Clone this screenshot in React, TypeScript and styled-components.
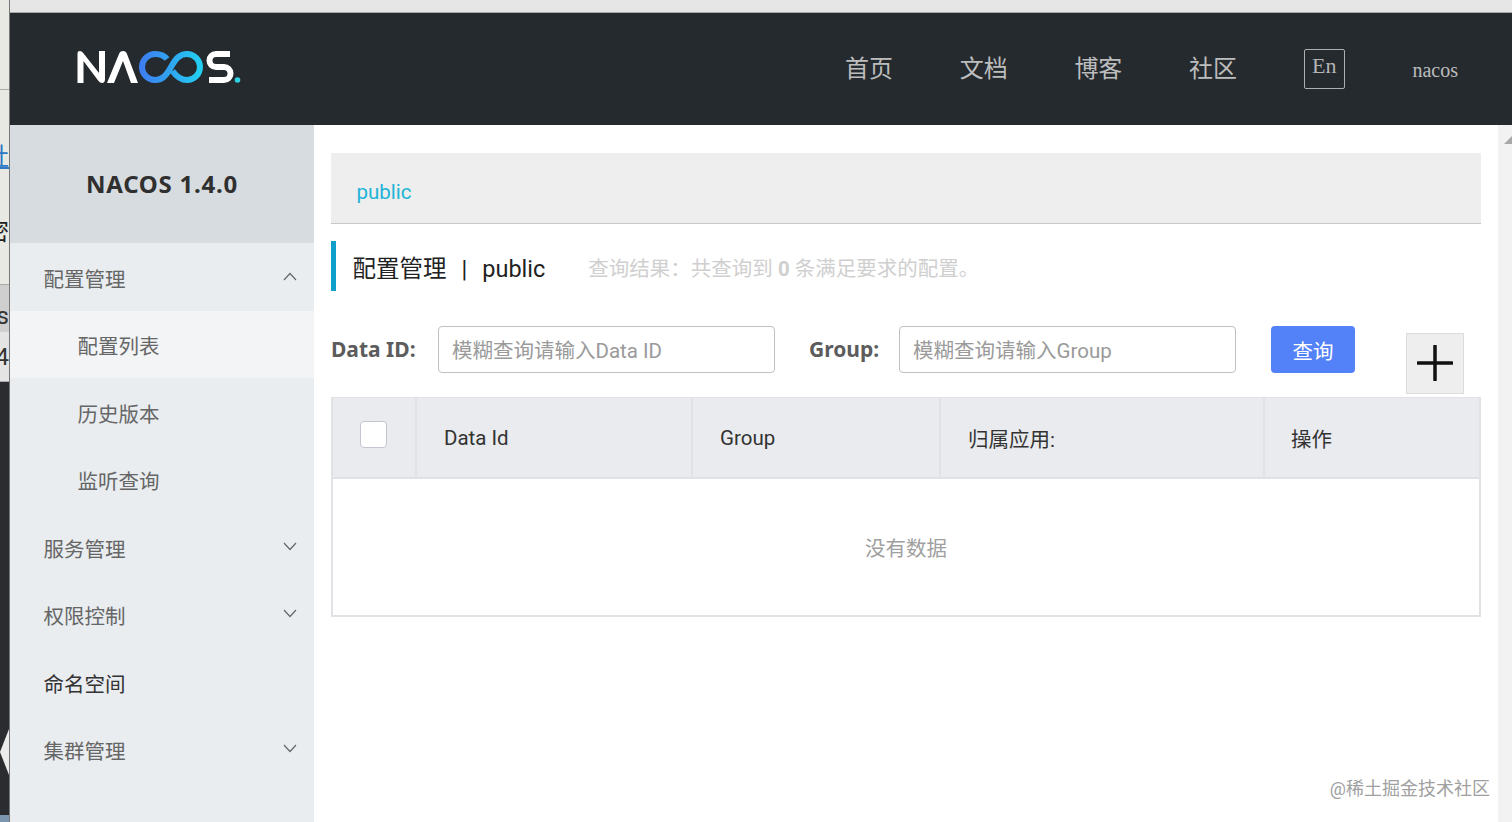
import React from "react";
import styled, { createGlobalStyle } from "styled-components";

const Global = createGlobalStyle`
  html, body { margin: 0; padding: 0; height: 822px; overflow: hidden; background: #fff; }
  #root { height: 822px; }
  * { box-sizing: border-box; }
`;

const CJK = `Roboto, "Noto Sans CJK SC", sans-serif`;

const Shell = styled.div`
  display: flex;
  width: 1512px;
  height: 822px;
  position: relative;
  overflow: hidden;
  font-family: ${CJK};
`;

const Strip = styled.div`
  width: 10px;
  flex: none;
  display: flex;
  flex-direction: column;
  border-right: 1px solid #777;
  overflow: hidden;
`;

const StripPart = styled.div<{ $h: number; $bg: string; $color?: string; $line?: boolean; $under?: boolean }>`
  height: ${(p) => p.$h}px;
  flex: none;
  background: ${(p) => p.$bg};
  color: ${(p) => p.$color || "#222"};
  font-size: 24px;
  line-height: ${(p) => p.$h}px;
  white-space: nowrap;
  text-decoration: ${(p) => (p.$under ? "underline" : "none")};
  border-bottom: ${(p) => (p.$line ? "1px solid #aaa" : "none")};
  display: flex;
  justify-content: flex-end;
  position: relative;
`;

const StripArrow = styled.div`
  position: absolute;
  right: 0;
  top: 347px;
  width: 0;
  height: 0;
  border-top: 23px solid transparent;
  border-bottom: 23px solid transparent;
  border-right: 9px solid #ececec;
`;

const Column = styled.div`
  flex: 1;
  min-width: 0;
  display: flex;
  flex-direction: column;
`;

const TopEdge = styled.div`
  height: 13px;
  flex: none;
  background: #e6e6e6;
  border-bottom: 1px solid #a8a8a8;
`;

const Header = styled.header`
  height: 112px;
  flex: none;
  background: #252a2f;
  display: flex;
  align-items: center;
  padding-left: 60px;
`;

const Logo = styled.svg`
  width: 180px;
  height: 50px;
  flex: none;
  margin-top: -6px;
`;

const Nav = styled.nav`
  margin-left: 595px;
  display: flex;
  align-items: center;
  gap: 66.7px;
`;

const NavLink = styled.span`
  font-size: 24px;
  color: #bdbdbd;
  line-height: 32px;
  white-space: nowrap;
`;

const Lang = styled.span`
  width: 41px;
  height: 40px;
  border: 1.5px solid #aeaeae;
  border-radius: 2px;
  color: #b4b4b4;
  font-family: "Liberation Serif", serif;
  font-size: 22px;
  line-height: 32px;
  text-align: center;
`;

const User = styled.span`
  margin-left: 1px;
  font-family: "Liberation Serif", serif;
  font-size: 20px;
  color: #bdbdbd;
  margin-top: 2px;
`;

const Body = styled.div`
  flex: 1;
  display: flex;
  min-height: 0;
`;

const Sidebar = styled.aside`
  width: 304px;
  flex: none;
  background: #e9edf0;
`;

const Brand = styled.div`
  height: 118px;
  background: #d6dce0;
  display: flex;
  align-items: center;
  justify-content: center;
  font-family: "Noto Sans", sans-serif;
  font-weight: 700;
  font-size: 24px;
  letter-spacing: 0.75px;
  color: #2f2f2f;
  padding-bottom: 2px;
`;

const MenuRow = styled.div<{ $sub?: boolean; $active?: boolean; $dark?: boolean }>`
  height: 67.5px;
  display: flex;
  align-items: center;
  justify-content: space-between;
  padding-left: ${(p) => (p.$sub ? 67.5 : 33.5)}px;
  padding-right: 16px;
  padding-top: 2px;
  font-size: 20.5px;
  color: ${(p) => (p.$dark ? "#333" : "#666")};
  background: ${(p) => (p.$active ? "#f2f4f6" : "transparent")};
`;

const Chevron = styled.svg`
  width: 16px;
  height: 10px;
  margin-top: -4px;
  flex: none;
`;

const Main = styled.main`
  flex: 1;
  min-width: 0;
  padding: 28px 17px 0 17px;
  display: flex;
  flex-direction: column;
`;

const TabBar = styled.div`
  height: 71px;
  width: 1150px;
  flex: none;
  background: #eeeeee;
  border-bottom: 1px solid #c8c8c8;
  padding-left: 25.5px;
  display: flex;
  align-items: center;
  font-size: 20.5px;
  color: #1eb4d8;
  padding-top: 8px;
`;

const TitleRow = styled.div`
  margin-top: 17px;
  height: 50px;
  flex: none;
  border-left: 5px solid #0f9fca;
  padding-left: 16.5px;
  padding-top: 2px;
  display: flex;
  align-items: center;
  white-space: nowrap;
`;

const TitleText = styled.span`
  font-size: 23.5px;
  color: #222;
  margin-right: 43px;
`;

const Sep = styled.span`
  margin: 0 15px;
`;

const ResultText = styled.span`
  font-size: 20.5px;
  color: #cfcfcf;
  b { font-weight: 700; }
`;

const SearchRow = styled.div`
  margin-top: 35px;
  height: 47px;
  flex: none;
  display: flex;
  align-items: center;
  position: relative;
`;

const Label = styled.label<{ $w: number; $ml?: number }>`
  width: ${(p) => p.$w}px;
  flex: none;
  margin-left: ${(p) => p.$ml || 0}px;
  margin-top: -2px;
  font-family: "Noto Sans", sans-serif;
  font-weight: 700;
  font-size: 21px;
  color: #5c5c5c;
  white-space: nowrap;
`;

const Field = styled.input`
  width: 337px;
  height: 47px;
  flex: none;
  border: 1.5px solid #c0c0c0;
  border-radius: 4px;
  padding: 2px 13px 0;
  font-family: ${CJK};
  font-size: 20.5px;
  background: #fff;
  outline: none;
  &::placeholder { color: #9a9a9a; opacity: 1; }
`;

const QueryButton = styled.button`
  margin-left: 35px;
  width: 84px;
  height: 47px;
  flex: none;
  border: none;
  border-radius: 4px;
  background: #5281f8;
  color: #fff;
  font-family: ${CJK};
  font-size: 20.5px;
`;

const AddButton = styled.button`
  margin-left: 51px;
  margin-top: 27px;
  width: 58px;
  height: 61px;
  flex: none;
  padding: 0;
  background: #eeeeee;
  border: 1.5px solid #dcdcdc;
  display: flex;
  align-items: center;
  justify-content: center;
`;

const Table = styled.div`
  margin-top: 24px;
  width: 1150px;
  height: 220px;
  flex: none;
  border: 2px solid #e0e2e6;
  border-top-width: 1px;
  display: flex;
  flex-direction: column;
`;

const THead = styled.div`
  height: 81px;
  flex: none;
  background: #e9ebee;
  border-bottom: 2px solid #dfe1e5;
  display: flex;
`;

const Th = styled.div<{ $w: number; $center?: boolean; $last?: boolean }>`
  width: ${(p) => p.$w}px;
  flex: ${(p) => (p.$last ? 1 : "none")};
  display: flex;
  align-items: center;
  justify-content: ${(p) => (p.$center ? "center" : "flex-start")};
  padding-left: ${(p) => (p.$center ? 0 : p.$last ? 26 : 27)}px;
  padding-right: ${(p) => (p.$center ? 2 : 0)}px;
  border-right: ${(p) => (p.$last ? "none" : "2px solid #e0e2e6")};
  font-size: 20.5px;
  color: #333;
`;

const CheckBox = styled.span`
  width: 27px;
  height: 27px;
  margin-top: -6px;
  background: #fff;
  border: 1.5px solid #c4c6cf;
  border-radius: 4px;
  display: block;
`;

const Empty = styled.div`
  flex: 1;
  display: flex;
  align-items: center;
  justify-content: center;
  padding-bottom: 1px;
  font-size: 20.5px;
  color: #a0a0a0;
`;

const ScrollTrack = styled.div`
  width: 14px;
  flex: none;
  background: #f2f2f2;
  position: relative;
`;

const ScrollArrow = styled.div`
  position: absolute;
  top: 11px;
  left: 6px;
  width: 0;
  height: 0;
  border-left: 8px solid transparent;
  border-bottom: 8px solid #a8a8a8;
`;

const Watermark = styled.div`
  position: absolute;
  right: 22px;
  top: 776px;
  font-size: 18px;
  line-height: 26px;
  color: #a0a0a0;
`;

const Up = () => (
  <Chevron viewBox="0 0 16 10"><path d="M2 9 L8 2.5 L14 9" fill="none" stroke="#666" strokeWidth="1.2" /></Chevron>
);
const Down = () => (
  <Chevron viewBox="0 0 16 10"><path d="M2 2 L8 8.5 L14 2" fill="none" stroke="#666" strokeWidth="1.2" /></Chevron>
);

export default function App() {
  return (
    <Shell>
      <Global />
      <Strip>
        <StripPart $h={90} $bg="#e9e9e3" $line />
        <StripPart $h={50} $bg="#e9e9e3" />
        <StripPart $h={35} $bg="#e9e9e3" $color="#2e78c4" $under>社</StripPart>
        <StripPart $h={40} $bg="#e9e9e3" />
        <StripPart $h={35} $bg="#e9e9e3">密</StripPart>
        <StripPart $h={35} $bg="#e9e9e3" $line />
        <StripPart $h={15} $bg="#cfcfcf" />
        <StripPart $h={32} $bg="#cfcfcf" $color="#333">s</StripPart>
        <StripPart $h={50} $bg="#e4e4e4" $color="#333" $line>4</StripPart>
        <StripPart $h={433} $bg="#2a2c30"><StripArrow /></StripPart>
        <StripPart $h={7} $bg="#7d96b0" />
      </Strip>
      <Column>
        <TopEdge />
        <Header>
          <Logo viewBox="0 0 180 50">
            <defs>
              <linearGradient id="inf" x1="0" y1="0" x2="1" y2="0">
                <stop offset="0" stopColor="#3d7ff0" />
                <stop offset="1" stopColor="#23cdf2" />
              </linearGradient>
            </defs>
            <path fill="#fff" d="M7.500 42 V12 q0-2 2.500-2 q1.500 0 3 1.700 L29 32 V10 h6 V38 q0 4-3 4 q-2 0-3.500-2 L13.500 20 V42 Z" />
            <path fill="#fff" d="M37 42 L49 13 q1-3 4-3 q3 0 4 3 L68 42 h-7 L53 20 L44 42 Z" />
            <path fill="none" stroke="url(#inf)" strokeWidth="6" d="M97 18 C94 14 90 13 85 13 A13 13 0 0 0 85 39 C92 39 96 35 101 26 C106 17 110 13 117 13 A13 13 0 0 1 117 39 C110 39 106 35 102.500 30" />
            <path fill="none" stroke="#fff" strokeWidth="6" d="M160 13 H146 a6.500 6.500 0 0 0 0 13 h8 a6.500 6.500 0 0 1 0 13 H139" />
            <circle cx="167.500" cy="39" r="2.800" fill="#2fd3e6" />
          </Logo>
          <Nav>
            <NavLink>首页</NavLink>
            <NavLink>文档</NavLink>
            <NavLink>博客</NavLink>
            <NavLink>社区</NavLink>
            <Lang>En</Lang>
            <User>nacos</User>
          </Nav>
        </Header>
        <Body>
          <Sidebar>
            <Brand>NACOS 1.4.0</Brand>
            <MenuRow>配置管理<Up /></MenuRow>
            <MenuRow $sub $active>配置列表</MenuRow>
            <MenuRow $sub>历史版本</MenuRow>
            <MenuRow $sub>监听查询</MenuRow>
            <MenuRow>服务管理<Down /></MenuRow>
            <MenuRow>权限控制<Down /></MenuRow>
            <MenuRow $dark>命名空间</MenuRow>
            <MenuRow>集群管理<Down /></MenuRow>
          </Sidebar>
          <Main>
            <TabBar>public</TabBar>
            <TitleRow>
              <TitleText>配置管理<Sep>|</Sep>public</TitleText>
              <ResultText>查询结果：共查询到 <b>0</b> 条满足要求的配置。</ResultText>
            </TitleRow>
            <SearchRow>
              <Label $w={107}>Data ID:</Label>
              <Field placeholder="模糊查询请输入Data ID" />
              <Label $w={90} $ml={34}>Group:</Label>
              <Field placeholder="模糊查询请输入Group" />
              <QueryButton>查询</QueryButton>
              <AddButton>
                <svg width="36" height="36" viewBox="0 0 36 36">
                  <path d="M18 1 V35 M1 18 H35" stroke="#111" strokeWidth="3.500" strokeLinecap="round" />
                </svg>
              </AddButton>
            </SearchRow>
            <Table>
              <THead>
                <Th $w={84} $center><CheckBox /></Th>
                <Th $w={276}>Data Id</Th>
                <Th $w={248}>Group</Th>
                <Th $w={324}>归属应用:</Th>
                <Th $w={215} $last>操作</Th>
              </THead>
              <Empty>没有数据</Empty>
            </Table>
          </Main>
          <ScrollTrack><ScrollArrow /></ScrollTrack>
        </Body>
      </Column>
      <Watermark>@稀土掘金技术社区</Watermark>
    </Shell>
  );
}
